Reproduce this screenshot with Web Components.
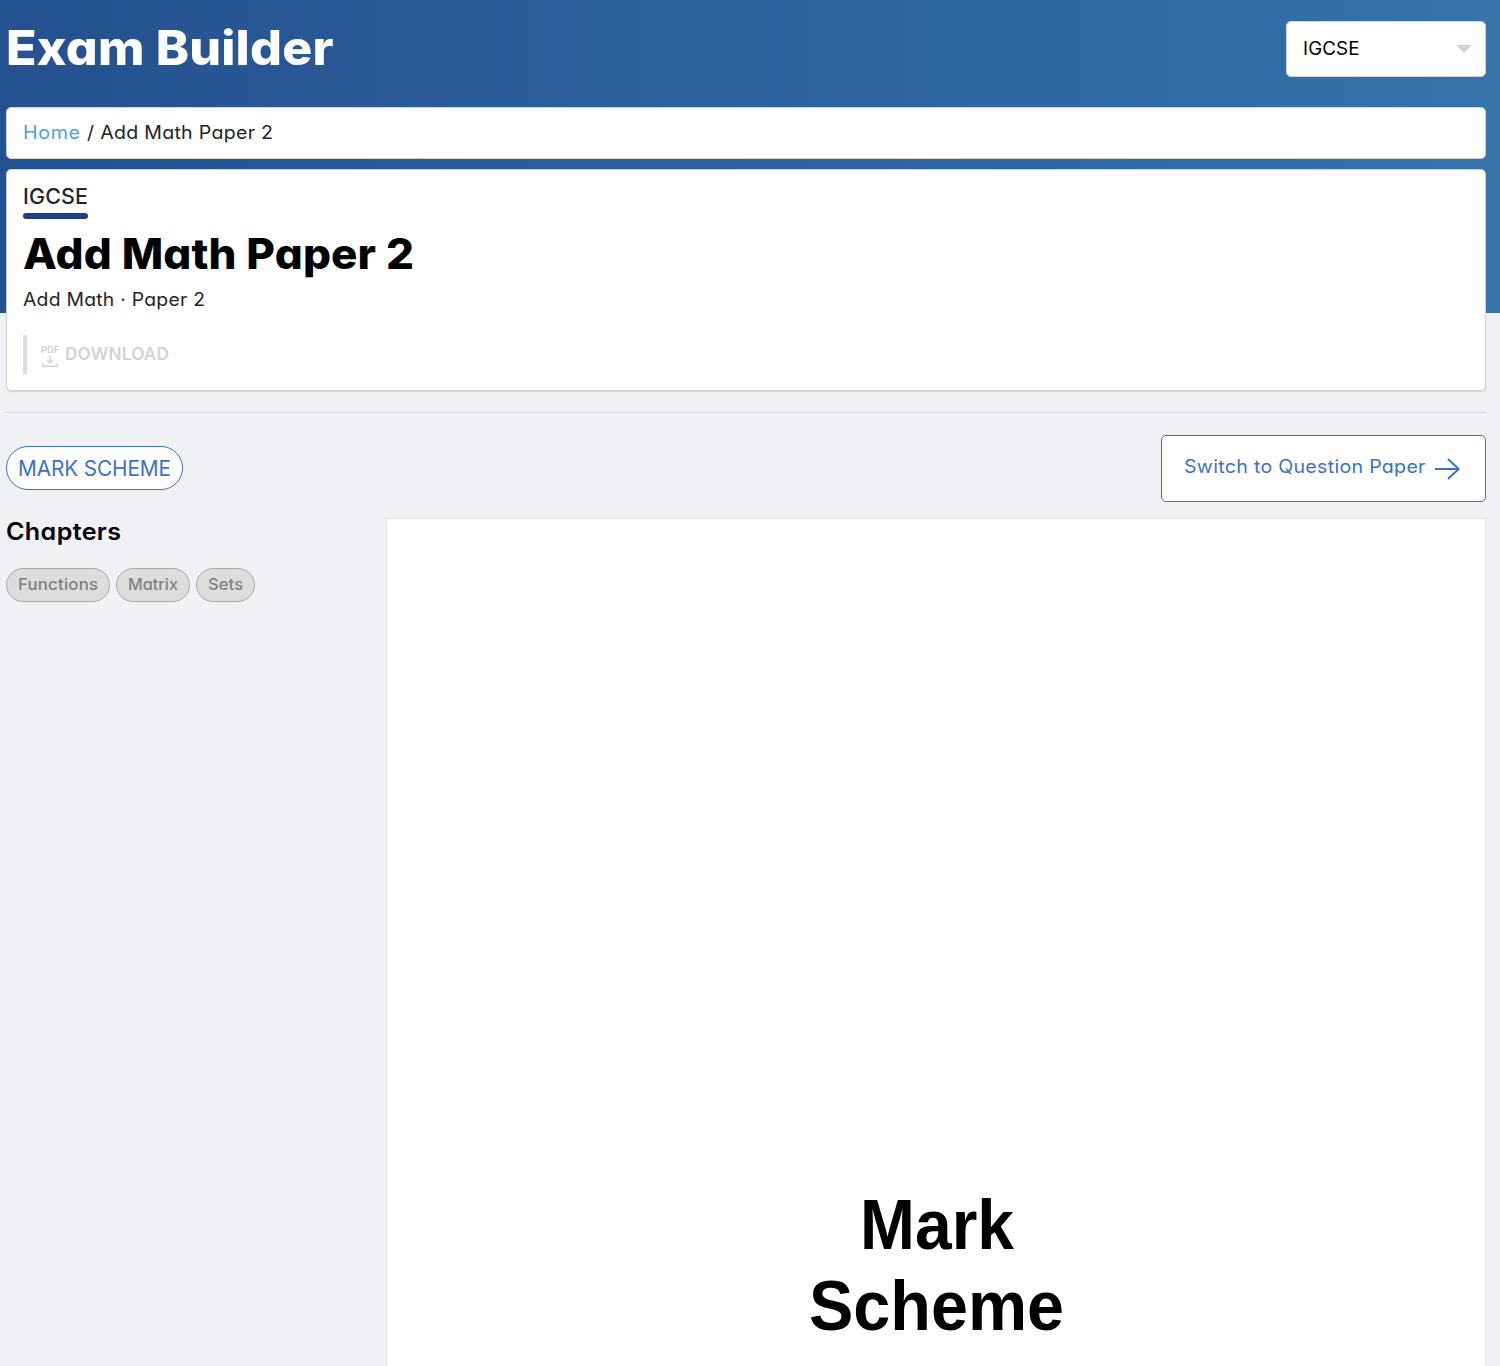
<!DOCTYPE html>
<html lang="en">
<head>
<meta charset="utf-8">
<title>Exam Builder</title>
<style>
html,body{margin:0;padding:0}
body{height:1366px;overflow:hidden;font-family:Inter,"Open Sans",sans-serif;font-feature-settings:"cv11" 1;background:#f0f1f5}
</style>
</head>
<body>
<exam-page></exam-page>
<script>
const define = (name, html, ready) => customElements.define(name, class extends HTMLElement {
  connectedCallback() {
    if (!this.shadowRoot) this.attachShadow({mode: 'open'}).innerHTML = html;
    if (ready) ready(this);
  }
});

/* A single line of text set to a given width: "mix" is the share of the
   difference taken by the glyph widths, the rest goes to tracking. */
define('tracked-text', `<style>
:host{display:inline-block;white-space:pre;flex:none}
span{display:inline-block;transform-origin:0 50%}
</style><span><slot></slot></span>`, el => {
  const span = el.shadowRoot.querySelector('span');
  const w = parseFloat(el.getAttribute('w'));
  const mix = parseFloat(el.getAttribute('mix') || '0.7');
  const natural = span.getBoundingClientRect().width;
  const scale = 1 + (w / natural - 1) * mix;
  const gap = (w / scale - natural) / (el.textContent.length - 1);
  span.style.letterSpacing = gap.toFixed(3) + 'px';
  span.style.transform = 'scaleX(' + scale.toFixed(4) + ')';
  el.style.width = w + 'px';
});

define('level-select', `<style>
:host{display:flex;box-sizing:border-box;width:200px;height:56px;padding:0 13px 1px 16px;align-items:center;justify-content:space-between;background:#fff;border:1px solid #d3d3d3;border-radius:5px;font-size:18.3px;color:#000}
svg{display:block;margin-top:1px}
tracked-text{margin-bottom:2px}
</style><tracked-text w="56.5">IGCSE</tracked-text>
<svg width="16" height="8" viewBox="0 0 16 8"><path d="M0 0h16L8 8z" fill="#d3d3d3"/></svg>`);

define('page-header', `<style>
:host{display:flex;box-sizing:border-box;height:107px;padding-top:21px;align-items:flex-start;justify-content:space-between}
h1{margin:0;font-size:47.5px;line-height:54px;font-weight:850;color:#fff}
</style><h1><tracked-text w="327.5" mix="0.9">Exam Builder</tracked-text></h1><level-select></level-select>`);

define('crumb-bar', `<style>
:host{display:flex;box-sizing:border-box;height:52px;padding:0 16px 2px;align-items:center;background:#fff;border:1px solid #d3d3d3;border-radius:5px;font-size:18.3px;line-height:26px;color:#212529}
a{color:#4ba3dd;margin-right:6.5px}
</style><a><tracked-text w="57">Home</tracked-text></a><tracked-text w="186">/ Add Math Paper 2</tracked-text>`);

define('download-link', `<style>
:host{display:flex;box-sizing:border-box;height:39px;border-left:4px solid #dcdcdc;padding-left:13px;align-items:center;color:#d3d3d3;font-size:16.8px;font-weight:600;line-height:36px}
tracked-text{margin-bottom:2px}
svg{display:block;overflow:visible;margin:1px 5px 0 0}
</style><svg width="20" height="28" viewBox="0 -4 20 28" fill="none" stroke="#d3d3d3" stroke-width="1.4">
<text x="0.8" y="8.3" font-family="Roboto" font-size="9.8" font-weight="500" textLength="18" lengthAdjust="spacing" fill="#cfcfcf" stroke="none">PDF</text>
<path d="M10 10.2v7.4M6.8 14.7l3.2 3.1 3.2-3.1M2.7 17.7v3.5h14.6v-3.5"/></svg>
<tracked-text w="104">DOWNLOAD</tracked-text>`);

define('paper-card', `<style>
:host{display:flex;flex-direction:column;align-items:flex-start;box-sizing:border-box;height:222px;margin-top:10px;padding:13px 16px 0;background:#fff;border:1px solid #d3d3d3;border-radius:5px;box-shadow:0 1px 1px rgba(0,0,0,.13);color:#212529}
.level{font-size:20.8px;font-weight:500;line-height:27px;height:30px}
.bar{width:65px;height:6px;border-radius:3px;background:#1c3f86}
h2{margin:7px 0 0;font-size:42px;line-height:56px;font-weight:800;color:#000}
p{margin:4px 0 0;font-size:18.3px;line-height:26px}
download-link{margin-top:23px}
</style><div class="level"><tracked-text w="65">IGCSE</tracked-text></div><div class="bar"></div>
<h2><tracked-text w="391" mix="0.9">Add Math Paper 2</tracked-text></h2>
<p><tracked-text w="182">Add Math · Paper 2</tracked-text></p>
<download-link></download-link>`);

define('switch-button', `<style>
:host{display:flex;box-sizing:border-box;width:325px;height:67px;padding:0 25px 4px 22px;align-items:center;justify-content:space-between;background:#fff;border:1px solid #3b71ca;border-radius:5px;color:#3b71ca;font-size:18.3px}
svg{display:block;margin-top:5px}
tracked-text{margin-bottom:1px}
</style><tracked-text w="241.5">Switch to Question Paper</tracked-text>
<svg width="25" height="22" viewBox="0 0 25 22" fill="none" stroke="#3b71ca" stroke-width="2" stroke-linejoin="round"><path d="M0 11h23.5M13 1l10.7 10L13 21"/></svg>`);

define('scheme-badge', `<style>
:host{display:flex;box-sizing:border-box;width:177px;height:44px;margin-bottom:1px;padding:1px 0 0 11px;align-items:center;background:#fff;border:1px solid #3b71ca;border-radius:22px;color:#3b71ca;font-size:21px}
</style><tracked-text w="153">MARK SCHEME</tracked-text>`);

define('chapter-chip', `<style>
:host{display:flex;box-sizing:border-box;height:34px;padding:0 11px 2px;align-items:center;background:#dcdcdc;border:1px solid #a9a9a9;border-radius:17px;color:#808080;font-size:16px;font-weight:500}
</style><slot></slot>`);

define('chapter-list', `<style>
:host{display:block;width:380px}
h3{margin:0 0 22px;font-size:23.8px;line-height:28px;font-weight:600;color:#000}
div{display:flex;gap:6px}
</style><h3><tracked-text w="115">Chapters</tracked-text></h3>
<div><chapter-chip><tracked-text w="80">Functions</tracked-text></chapter-chip><chapter-chip><tracked-text w="50">Matrix</tracked-text></chapter-chip><chapter-chip><tracked-text w="35">Sets</tracked-text></chapter-chip></div>`);

define('paper-sheet', `<style>
:host{display:flex;flex-direction:column;align-items:center;box-sizing:border-box;flex:1;height:848px;padding:665px 0 0 1px;background:#fff;border:1px solid #dee2e6;border-bottom:0;font:bold 70.2px/81px "Liberation Sans",Arial,sans-serif;color:#000}
</style><tracked-text w="154" mix="1">Mark</tracked-text><tracked-text w="255" mix="1">Scheme</tracked-text>`);

define('exam-page', `<style>
:host{display:block;box-sizing:border-box;height:1366px;padding:0 14px 0 6px;background:linear-gradient(to right,#24518f,#3573aa) no-repeat 0 0/100% 313px}
hr{border:0;height:1px;margin:21px 0 22px;background:#d5d6da}
.tools,.main{display:flex;justify-content:space-between;align-items:center}
.main{align-items:flex-start;margin-top:16px}
</style><page-header></page-header><crumb-bar></crumb-bar><paper-card></paper-card><hr>
<div class="tools"><scheme-badge></scheme-badge><switch-button></switch-button></div>
<div class="main"><chapter-list></chapter-list><paper-sheet></paper-sheet></div>`);
</script>
</body>
</html>
